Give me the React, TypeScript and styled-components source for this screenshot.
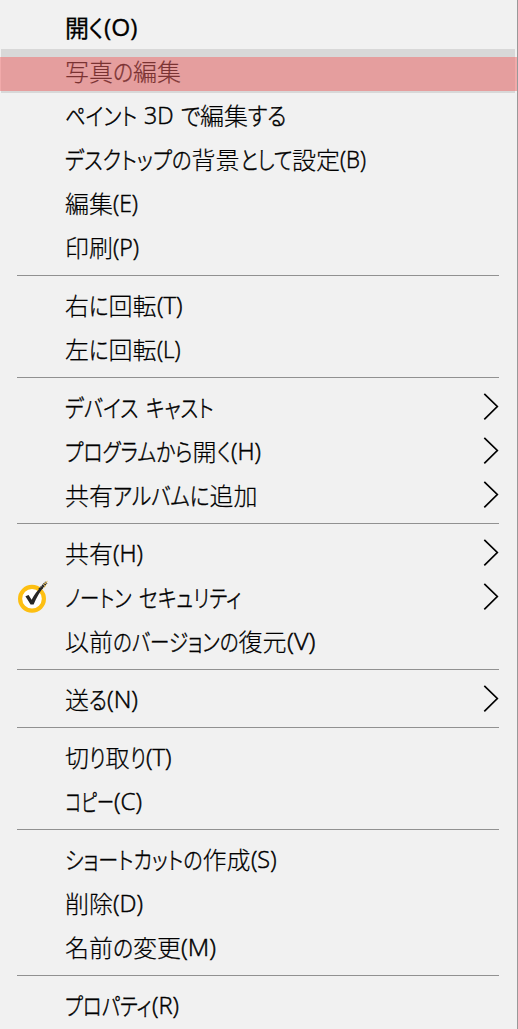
import React, { useLayoutEffect, useRef, useState } from "react";
import styled, { createGlobalStyle, css } from "styled-components";

const GlobalStyle = createGlobalStyle`
  body { margin: 0; background: #f1f1f1; }
`;

const Menu = styled.ul`
  box-sizing: border-box;
  width: 518px;
  height: 1029px;
  margin: 0;
  padding: 5px 0 0;
  overflow: hidden;
  list-style: none;
  background: #f1f1f1;
  border-right: 1px solid #999;
  color: #000;
`;

const Item = styled.li<{ $hot?: boolean }>`
  position: relative;
  display: flex;
  align-items: center;
  box-sizing: border-box;
  height: 44px;
  margin: 0 2px 0 1px;
  padding-right: 16px;
  ${(p) => p.$hot && css`background: #d8d8d8;`}
`;

const Marker = styled.div`
  position: absolute;
  top: 8px;
  left: -1px;
  width: 518px;
  height: 34px;
  background: rgba(242, 100, 100, 0.5);
`;

const Separator = styled.li`
  height: 1px;
  margin: 6px 18px 7px 17px;
  background: #919191;
`;

const IconSlot = styled.div`
  display: flex;
  width: 64px;
  padding-left: 14px;
  box-sizing: border-box;
  flex: none;
`;

const Label = styled.div`
  display: flex;
  flex: 1;
  height: 44px;
  line-height: 44px;
  font-size: 24px;
`;

type Script = "kanji" | "kana" | "latin";

const RunBox = styled.span<{ $w: number; $script: Script; $strong?: boolean }>`
  flex: none;
  width: ${(p) => p.$w}px;
  white-space: pre;
  font-family: "Noto Sans CJK JP", sans-serif;
  font-weight: 300;
  ${(p) => p.$script === "kanji" && css`-webkit-text-stroke-width: 0.2px;`}
  ${(p) => p.$script === "kana" && css`
    font-feature-settings: "palt";
    -webkit-text-stroke-width: 0.45px;
  `}
  ${(p) => p.$script === "latin" && css`
    font-family: "Open Sans", "Noto Sans", sans-serif;
    -webkit-text-stroke-width: 0.5px;
  `}
  ${(p) => p.$strong && css`
    font-weight: ${p.$script === "latin" ? 500 : 400};
    -webkit-text-stroke-width: 0.3px;
  `}
`;

const Glyphs = styled.span`
  display: inline-block;
  transform-origin: 0 50%;
`;

const Arrow = styled.svg`
  display: block;
  flex: none;
`;

const scriptOf = (text: string): Script =>
  /[\u4e00-\u9fff]/.test(text) ? "kanji" : /[\u3040-\u30ff]/.test(text) ? "kana" : "latin";

/* Condenses a run of glyphs to the width it takes in the UI font. */
function Run({ text, width, strong }: { text: string; width: number; strong?: boolean }) {
  const ref = useRef<HTMLSpanElement>(null);
  const [scale, setScale] = useState(1);
  useLayoutEffect(() => {
    const el = ref.current;
    if (el) setScale(width / parseFloat(getComputedStyle(el).width));
  }, [width, text]);
  return (
    <RunBox $w={width} $script={scriptOf(text)} $strong={strong}>
      <Glyphs ref={ref} style={{ transform: `scaleX(${scale})` }}>{text}</Glyphs>
    </RunBox>
  );
}

function NortonIcon() {
  return (
    <svg width="34" height="34" viewBox="0 0 34 34">
      <circle cx="17" cy="18.8" r="11.9" fill="#fff" stroke="#fdbf12" strokeWidth="4.2" />
      <path d="M10.4 16.2 L13.6 15 L16.6 19.8 C19 14.8 22.4 10 26.6 6.4 L29.6 5.6 C25 11.4 21.4 18 18.6 24.6 L15.6 24.6 Z" fill="#262626" />
      <path d="M24.5 9.8 L31.4 2.4" stroke="#262626" strokeWidth="3" strokeDasharray="1.6 .7" />
      <path d="M28.4 4.6 L32.4 1.4 M29 7.6 L31 4.8" stroke="#d9a92c" strokeWidth="1" />
    </svg>
  );
}

type Entry = {
  runs: [string, number][];
  hot?: boolean;
  strong?: boolean;
  icon?: boolean;
  sub?: boolean;
};

const groups: Entry[][] = [
  [
    { runs: [["開", 24], ["く", 14.5], ["(O)", 33.5]], strong: true },
    { runs: [["写真", 48], ["の", 20], ["編集", 48]], hot: true },
    { runs: [["ペイント", 72], [" ", 7], ["3D", 29.5], [" ", 7], ["で", 19.5], ["編集", 48], ["する", 38.5]] },
    { runs: [["デスクトップの", 126.5], ["背景", 48], ["として", 52.5], ["設定", 48], ["(B)", 26]] },
    { runs: [["編集", 48], ["(E)", 25]] },
    { runs: [["印刷", 48], ["(P)", 26]] },
  ],
  [
    { runs: [["右", 24], ["に", 19.5], ["回転", 48], ["(T)", 25.5]] },
    { runs: [["左", 24], ["に", 19.5], ["回転", 48], ["(L)", 23.5]] },
  ],
  [
    { runs: [["デバイス", 73.5], [" ", 7], ["キャスト", 67.5]], sub: true },
    { runs: [["プログラムから", 127.5], ["開", 24], ["く", 14], ["(H)", 30]], sub: true },
    { runs: [["共有", 48], ["アルバムに", 96.5], ["追加", 48]], sub: true },
  ],
  [
    { runs: [["共有", 48], ["(H)", 30]], sub: true },
    { runs: [["ノートン", 66.5], [" ", 7], ["セキュリティ", 102.5]], icon: true, sub: true },
    { runs: [["以前", 48], ["のバージョンの", 125.5], ["復元", 48], ["(V)", 28.5]] },
  ],
  [{ runs: [["送", 24], ["る", 18], ["(N)", 31]], sub: true }],
  [
    { runs: [["切", 24], ["り", 16.5], ["取", 24], ["り", 16], ["(T)", 25.5]] },
    { runs: [["コピー", 49], ["(C)", 28]] },
  ],
  [
    { runs: [["ショートカットの", 137.5], ["作成", 48], ["(S)", 25.5]] },
    { runs: [["削除", 48], ["(D)", 30]] },
    { runs: [["名前", 48], ["の", 20], ["変更", 48], ["(M)", 35]] },
  ],
  [{ runs: [["プロパティ", 86.5], ["(R)", 27]] }],
];

export default function App() {
  return (
    <>
      <GlobalStyle />
      <Menu>
        {groups.map((group, g) => (
          <React.Fragment key={g}>
            {g > 0 && <Separator />}
            {group.map((entry, i) => (
              <Item key={i} $hot={entry.hot}>
                <IconSlot>{entry.icon && <NortonIcon />}</IconSlot>
                <Label>
                  {entry.runs.map(([text, width], r) => (
                    <Run key={r} text={text} width={width} strong={entry.strong} />
                  ))}
                </Label>
                {entry.sub && (
                  <Arrow width="17" height="28" viewBox="0 0 17 28">
                    <path d="M2.3 .9 L15.3 13.5 L2.3 26.3" fill="none" stroke="#000" strokeWidth="1.7" />
                  </Arrow>
                )}
                {entry.hot && <Marker />}
              </Item>
            ))}
          </React.Fragment>
        ))}
      </Menu>
    </>
  );
}
